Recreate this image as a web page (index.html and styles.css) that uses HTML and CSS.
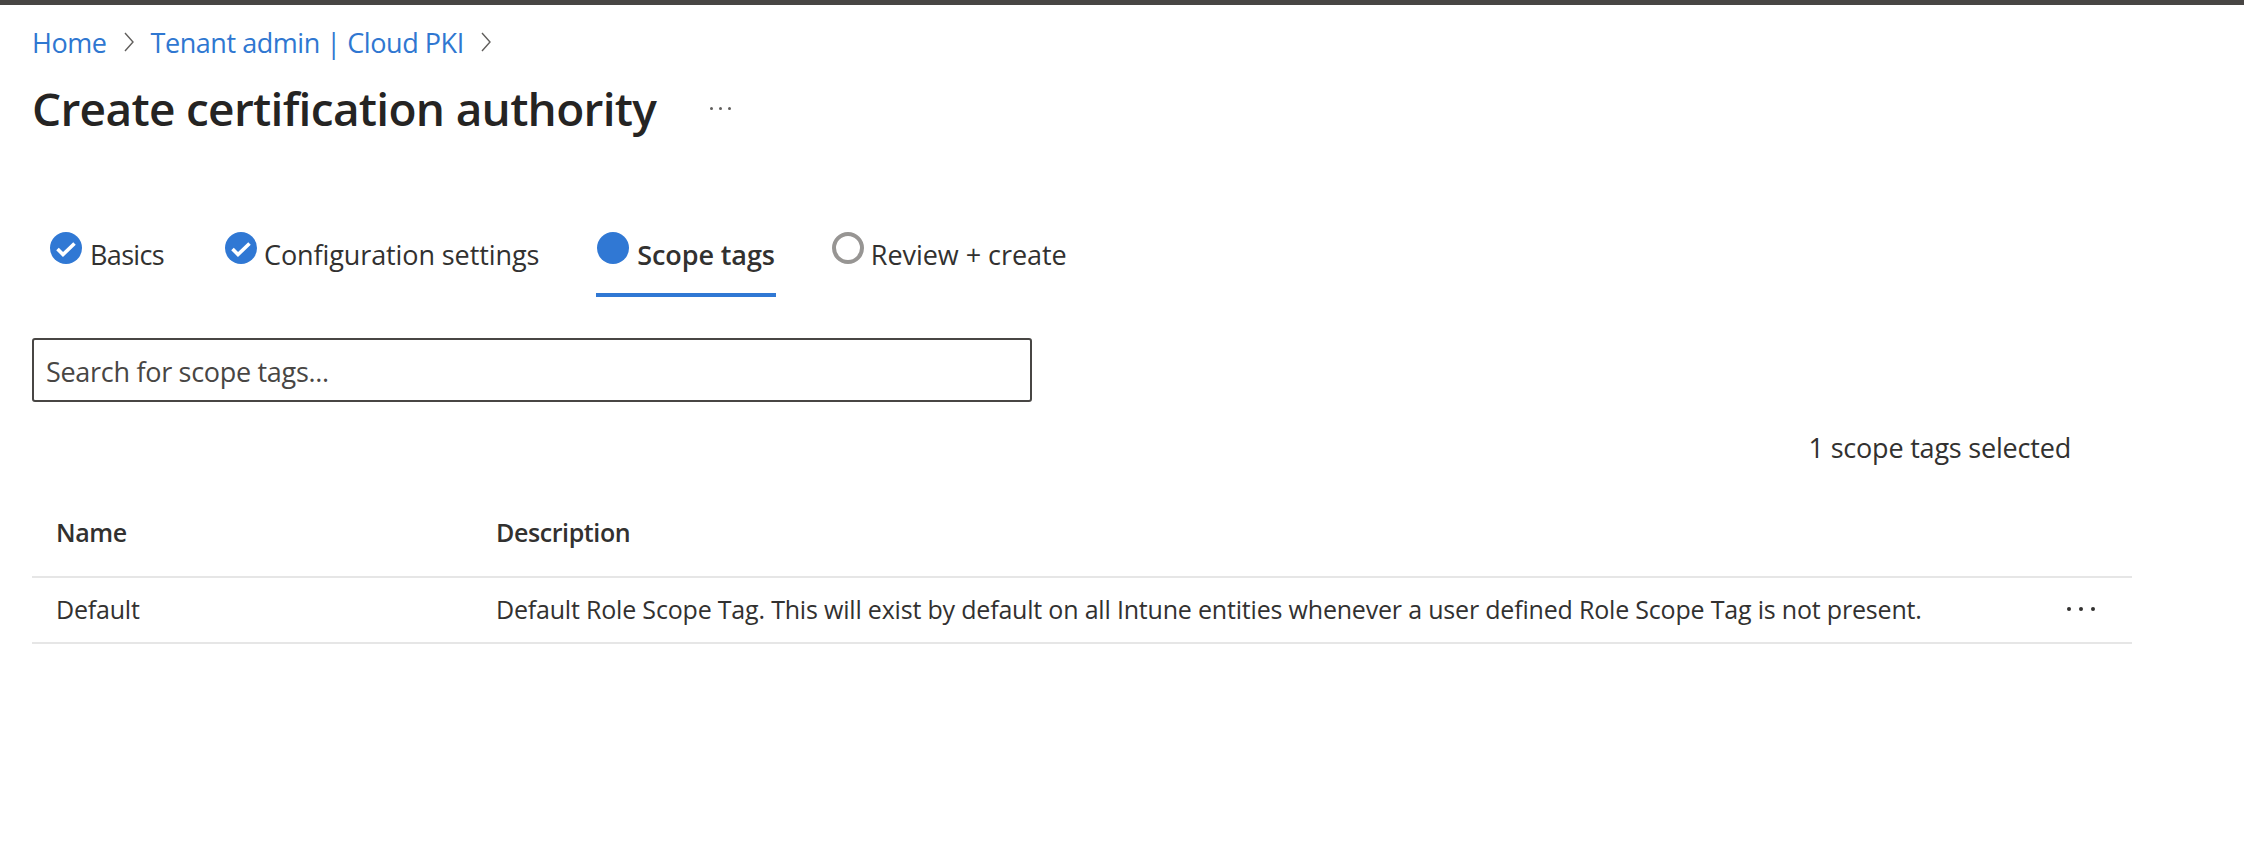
FILE: index.html
```html
<!DOCTYPE html>
<html lang="en">
<head>
<meta charset="utf-8">
<title>Create certification authority</title>
<link rel="stylesheet" href="styles.css">
</head>
<body>
<div class="topbar"></div>
<main class="page">
  <nav class="crumbs">
    <a class="crumb">Home</a>
    <svg class="chev" viewBox="0 0 12 20"><path d="M2 1l8 9-8 9" /></svg>
    <a class="crumb">Tenant admin | Cloud PKI</a>
    <svg class="chev" viewBox="0 0 12 20"><path d="M2 1l8 9-8 9" /></svg>
  </nav>
  <header class="title-row">
    <h1 class="title">Create certification authority</h1>
    <span class="title-more"><i></i><i></i><i></i></span>
  </header>
  <div class="tabs">
    <div class="tab tab-basics">
      <svg class="step" viewBox="0 0 32 32"><circle cx="16" cy="16" r="16" fill="#3078d4"/><path d="M7.5 17l5.5 5.5L24.5 11.5" fill="none" stroke="#fff" stroke-width="3.6"/></svg>
      <span>Basics</span>
    </div>
    <div class="tab tab-config">
      <svg class="step" viewBox="0 0 32 32"><circle cx="16" cy="16" r="16" fill="#3078d4"/><path d="M7.5 17l5.5 5.5L24.5 11.5" fill="none" stroke="#fff" stroke-width="3.6"/></svg>
      <span>Configuration settings</span>
    </div>
    <div class="tab tab-active">
      <svg class="step" viewBox="0 0 32 32"><circle cx="16" cy="16" r="16" fill="#3078d4"/></svg>
      <span>Scope tags</span>
    </div>
    <div class="tab tab-review">
      <svg class="step" viewBox="0 0 32 32"><circle cx="16" cy="16" r="14" fill="none" stroke="#979593" stroke-width="4"/></svg>
      <span>Review + create</span>
    </div>
  </div>
  <div class="search"><span>Search for scope tags...</span></div>
  <div class="count-row"><span>1 scope tags selected</span></div>
  <div class="table">
    <div class="row head">
      <div class="col-name">Name</div>
      <div class="col-desc">Description</div>
    </div>
    <div class="row body-row">
      <div class="col-name">Default</div>
      <div class="col-desc">Default Role Scope Tag. This will exist by default on all Intune entities whenever a user defined Role Scope Tag is not present.</div>
      <div class="row-more"><i></i><i></i><i></i></div>
    </div>
  </div>
</main>
</body>
</html>
```
FILE: styles.css
```css
* { box-sizing: border-box; }
html, body { margin: 0; padding: 0; background: #fff; }
body { width: 2244px; height: 860px; overflow: hidden; font-family: "Open Sans", "Noto Sans", sans-serif; color: #323130; }
.topbar { height: 5px; background: #484644; }
.page { padding: 0 112px 0 32px; }

.crumbs { display: flex; align-items: center; height: 36px; margin-top: 19px; font-size: 27px; letter-spacing: -0.45px; color: #2f77d1; }
.chev { width: 12px; height: 20px; margin: 0 16px 0 16px; fill: none; stroke: #605e5c; stroke-width: 1.4; }

.title-row { display: flex; align-items: center; height: 60px; margin-top: 18px; }
.title { margin: 0; font-size: 46px; font-weight: 600; letter-spacing: -0.7px; color: #252423; line-height: 60px; }
.title-more { display: flex; gap: 6px; margin-left: 54px; }
.title-more i { width: 3px; height: 3px; border-radius: 50%; background: #605e5c; }

.tabs { height: 65px; margin-top: 94px; display: flex; font-size: 27px; letter-spacing: -0.1px; }
.tab { display: flex; align-items: flex-start; height: 65px; }
.tab span { line-height: 36px; margin-top: 5px; }
.step { width: 32px; height: 32px; flex: none; }
.tab-basics { margin-left: 18px; gap: 8px; letter-spacing: -0.65px; }
.tab-config { margin-left: 61px; gap: 7px; }
.tab-active { margin-left: 57px; padding: 0 1px; gap: 8px; border-bottom: 4px solid #3078d4; font-weight: 600; }
.tab-review { margin-left: 56px; gap: 7px; letter-spacing: -0.05px; }

.search { width: 1000px; height: 64px; margin-top: 41px; padding: 2px 12px 0 12px; display: flex; align-items: center; border: 2px solid #484644; border-radius: 3px; font-size: 27px; letter-spacing: -0.3px; color: #484644; }

.count-row { display: flex; justify-content: flex-end; height: 36px; margin-top: 28px; padding-right: 61px; font-size: 27px; letter-spacing: -0.2px; line-height: 36px; }

.table { margin-top: 45px; font-size: 25px; letter-spacing: -0.19px; }
.row { display: flex; align-items: center; border-bottom: 2px solid #e6e6e6; }
.head { height: 67px; padding-bottom: 24px; font-weight: 600; letter-spacing: -0.4px; }
.body-row { height: 66px; padding-bottom: 3px; }
.col-name { width: 464px; padding-left: 24px; }
.col-desc { flex: 1; }
.row-more { display: flex; gap: 8px; margin-right: 37px; }
.row-more i { width: 4px; height: 4px; border-radius: 50%; background: #323130; }
```
